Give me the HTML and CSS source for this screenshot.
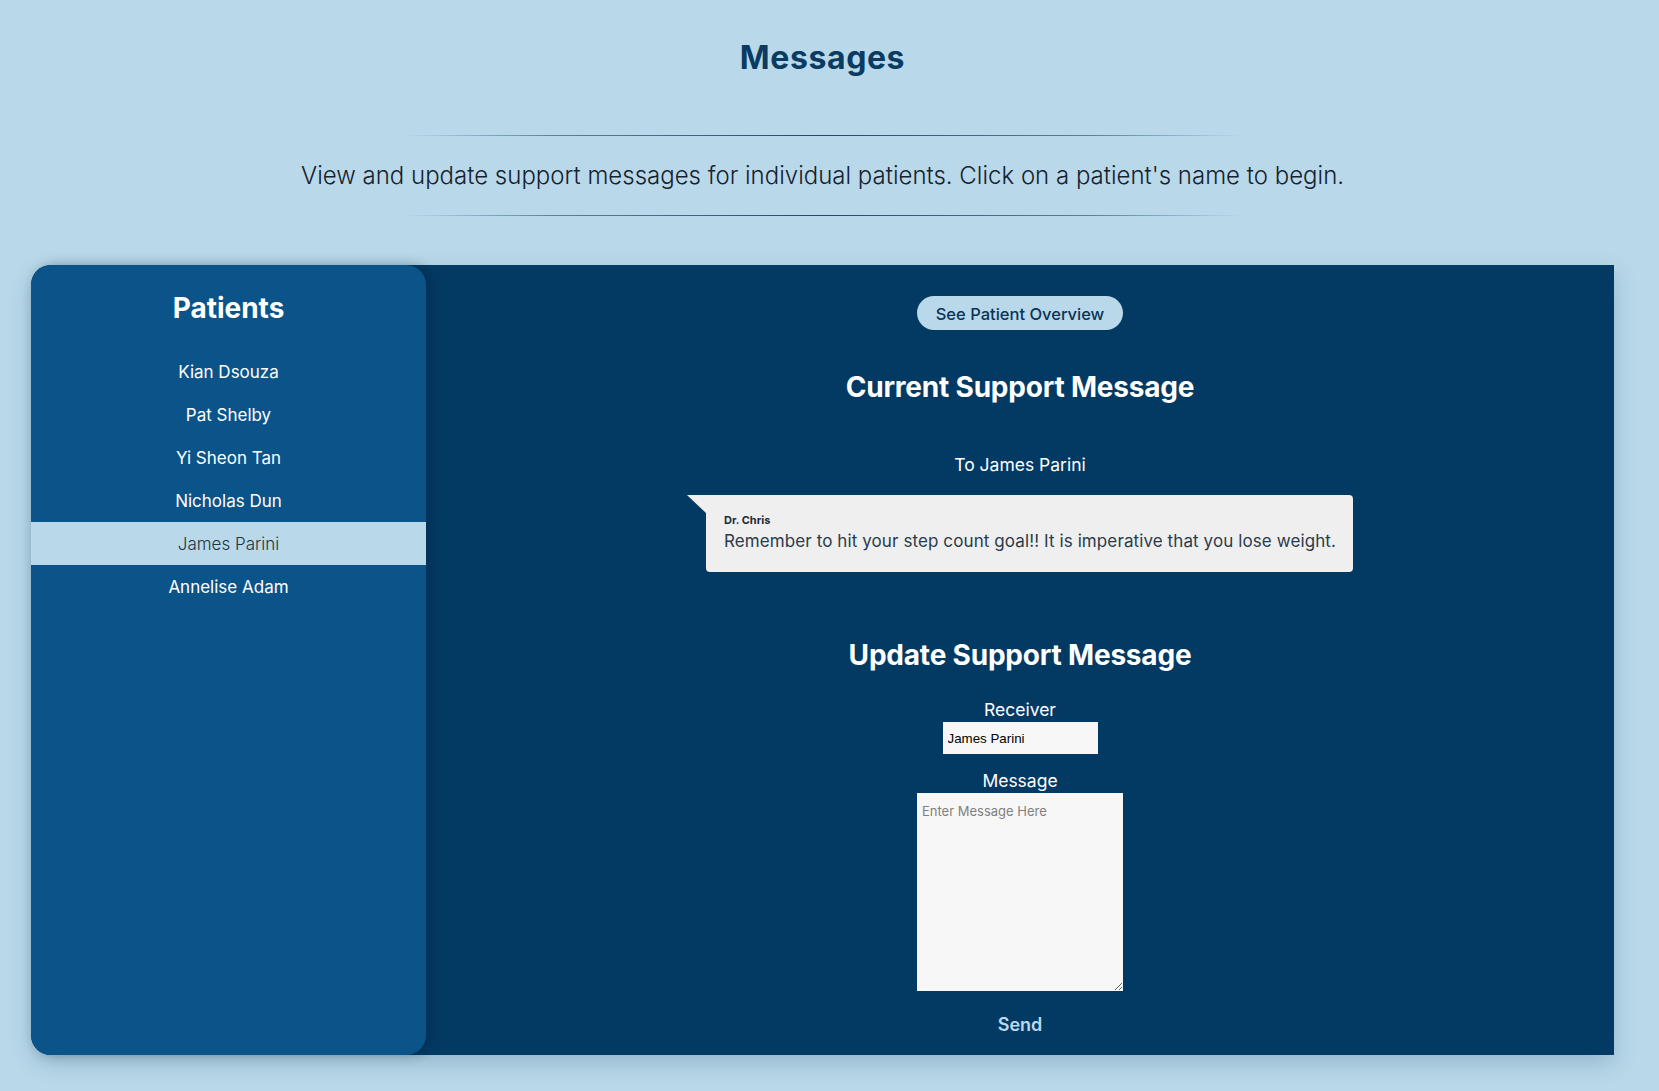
FILE: index.html
```html
<!DOCTYPE html>
<html lang="en">
<head>
<meta charset="utf-8">
<title>Messages</title>
<link rel="stylesheet" href="styles.css">
</head>
<body>
<div class="page">
  <header class="intro">
    <h1 class="title">Messages</h1>
    <hr class="rule rule-top">
    <p class="subtitle">View and update support messages for individual patients. Click on a patient's name to begin.</p>
    <hr class="rule rule-bottom">
  </header>

  <section class="panel">
    <aside class="sidebar">
      <h2 class="sidebar-title">Patients</h2>
      <ul class="patient-list">
        <li class="patient">Kian Dsouza</li>
        <li class="patient">Pat Shelby</li>
        <li class="patient">Yi Sheon Tan</li>
        <li class="patient">Nicholas Dun</li>
        <li class="patient active">James Parini</li>
        <li class="patient">Annelise Adam</li>
      </ul>
    </aside>

    <main class="content">
      <button class="overview-btn" type="button">See Patient Overview</button>

      <h2 class="section-title current-title">Current Support Message</h2>
      <p class="to-line">To James Parini</p>

      <div class="bubble-row">
        <div class="bubble">
          <span class="bubble-tail"></span>
          <div class="bubble-body">
            <div class="bubble-author">Dr. Chris</div>
            <div class="bubble-text">Remember to hit your step count goal!! It is imperative that you lose weight.</div>
          </div>
        </div>
      </div>

      <h2 class="section-title update-title">Update Support Message</h2>

      <form class="update-form">
        <label class="field-label receiver-label" for="receiver">Receiver</label>
        <input class="receiver-input" id="receiver" type="text" value="James Parini">
        <label class="field-label message-label" for="message">Message</label>
        <textarea class="message-input" id="message" placeholder="Enter Message Here"></textarea>
        <button class="send-btn" type="button">Send</button>
      </form>
    </main>
  </section>
</div>
</body>
</html>
```

FILE: styles.css
```css
* {
  box-sizing: border-box;
}

html, body {
  margin: 0;
  padding: 0;
}

body {
  background: #b9d9ea;
  font-family: Inter, "Open Sans", sans-serif;
  color: #1b2a38;
  min-height: 1091px;
}

.page {
  width: 1645px;
}

.intro {
  display: flex;
  flex-direction: column;
  align-items: center;
}

.title {
  margin: 0;
  padding-top: 38px;
  font-size: 32px;
  line-height: 39px;
  font-weight: 700;
  color: #0a3b63;
  letter-spacing: 0.6px;
}

.rule {
  width: 840px;
  height: 1px;
  border: 0;
  margin: 0;
  background: linear-gradient(to right, rgba(11, 59, 99, 0) 0%, rgba(11, 59, 99, 0.55) 18%, rgba(11, 59, 99, 0.9) 50%, rgba(11, 59, 99, 0.55) 82%, rgba(11, 59, 99, 0) 100%);
}

.rule-top {
  margin-top: 58px;
}

.subtitle {
  margin: 22px 0 0;
  padding-top: 4px;
  font-size: 24px;
  line-height: 28px;
  font-weight: 300;
  color: #16222e;
}

.rule-bottom {
  margin-top: 25px;
}

.panel {
  margin: 49px 31px 0;
  height: 790px;
  display: flex;
  background: #033a64;
  border-radius: 20px 0 0 20px;
  box-shadow: 0 8px 22px rgba(20, 60, 90, 0.22);
}

.sidebar {
  width: 395px;
  flex: none;
  background: #0b5489;
  border-radius: 20px;
  box-shadow: 4px 0 12px rgba(0, 20, 40, 0.28);
  padding-top: 26px;
  color: #ffffff;
  position: relative;
  z-index: 1;
}

.sidebar-title {
  margin: 0;
  text-align: center;
  font-size: 28px;
  line-height: 35px;
  font-weight: 700;
}

.patient-list {
  list-style: none;
  margin: 24px 0 0;
  padding: 0;
}

.patient {
  height: 43px;
  padding-top: 1px;
  line-height: 42px;
  text-align: center;
  font-size: 17px;
  font-weight: 400;
  color: #ffffff;
}

.patient.active {
  background: #b9d9ea;
  color: #1f3344;
  font-weight: 300;
}

.content {
  flex: 1;
  display: flex;
  flex-direction: column;
  align-items: center;
  padding-top: 31px;
  color: #ffffff;
}

.overview-btn {
  height: 34px;
  padding: 1px 19px 0;
  border: 0;
  border-radius: 17px;
  background: #b9d9ea;
  color: #0b3356;
  font-family: inherit;
  font-size: 16.5px;
  font-weight: 500;
}

.section-title {
  margin: 0;
  padding-top: 2px;
  font-size: 28px;
  line-height: 34px;
  font-weight: 700;
  letter-spacing: -0.2px;
  color: #ffffff;
}

.current-title {
  margin-top: 38px;
}

.to-line {
  margin: 48px 0 0;
  padding-top: 2px;
  font-size: 17.5px;
  line-height: 22px;
  font-weight: 400;
}

.bubble-row {
  margin-top: 19px;
  display: flex;
  justify-content: center;
}

.bubble {
  display: flex;
  align-items: flex-start;
}

.bubble-tail {
  width: 19px;
  height: 18px;
  flex: none;
  background: #efefef;
  clip-path: polygon(0 0, 100% 0, 100% 100%);
}

.bubble-body {
  background: #efefef;
  border-radius: 0 4px 4px 4px;
  padding: 18px 17px 19px 18px;
}

.bubble-author {
  font-size: 11px;
  line-height: 14px;
  font-weight: 700;
  color: #1c2b3b;
}

.bubble-text {
  margin-top: 2px;
  font-size: 17px;
  line-height: 24px;
  font-weight: 400;
  letter-spacing: 0.1px;
  color: #2a3b4c;
  white-space: nowrap;
}

.update-title {
  margin-top: 64px;
}

.update-form {
  display: flex;
  flex-direction: column;
  align-items: center;
}

.field-label {
  padding-top: 2px;
  font-size: 17.5px;
  line-height: 22px;
  font-weight: 400;
  color: #ffffff;
}

.receiver-label {
  margin-top: 25px;
}

.receiver-input {
  margin-top: 1px;
  width: 155px;
  height: 32px;
  border: 0;
  padding: 0 5px;
  background: #f7f7f7;
  font-family: "Liberation Sans", Arial, sans-serif;
  font-size: 13.33px;
  color: #000000;
}

.message-label {
  margin-top: 14px;
}

.message-input {
  margin-top: 1px;
  width: 206px;
  height: 198px;
  border: 0;
  padding: 10px 5px 7px;
  background: #f7f7f7;
  font-family: inherit;
  font-size: 13px;
  color: #222222;
  resize: both;
}

.message-input::placeholder {
  color: #808080;
}

.send-btn {
  margin-top: 21px;
  border: 0;
  padding: 2px 0 0;
  background: transparent;
  font-family: inherit;
  font-size: 18px;
  line-height: 22px;
  font-weight: 600;
  color: #b9d9ea;
}
```
